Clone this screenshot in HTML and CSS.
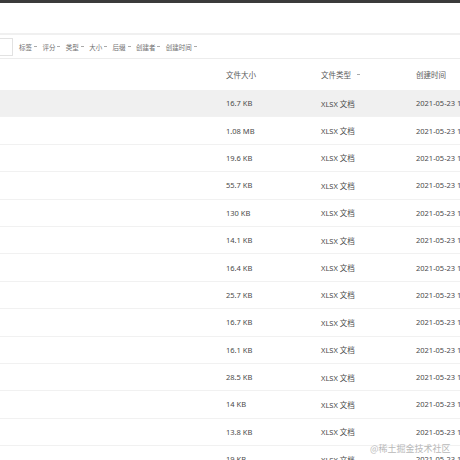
FILE: index.html
```html
<!DOCTYPE html>
<html lang="zh">
<head>
<meta charset="utf-8">
<link rel="stylesheet" href="styles.css">
</head>
<body>
<div class="page">
  <div class="topbar"></div>
  <div class="spacer"></div>
  <div class="filters">
    <div class="search"></div>
    <span class="filter">标签<i class="chev"></i></span>
    <span class="filter">评分<i class="chev"></i></span>
    <span class="filter">类型<i class="chev"></i></span>
    <span class="filter">大小<i class="chev"></i></span>
    <span class="filter">后缀<i class="chev"></i></span>
    <span class="filter">创建者<i class="chev"></i></span>
    <span class="filter">创建时间<i class="chev"></i></span>
  </div>
  <div class="table">
    <div class="row head">
      <span></span><span>文件大小</span><span>文件类型<i class="chev hchev"></i></span><span>创建时间</span>
    </div>
    <div class="row sel"><span></span><span>16.7 KB</span><span>XLSX 文档</span><span>2021-05-23 10:21</span></div>
    <div class="row"><span></span><span>1.08 MB</span><span>XLSX 文档</span><span>2021-05-23 10:21</span></div>
    <div class="row"><span></span><span>19.6 KB</span><span>XLSX 文档</span><span>2021-05-23 10:21</span></div>
    <div class="row"><span></span><span>55.7 KB</span><span>XLSX 文档</span><span>2021-05-23 10:21</span></div>
    <div class="row"><span></span><span>130 KB</span><span>XLSX 文档</span><span>2021-05-23 10:21</span></div>
    <div class="row"><span></span><span>14.1 KB</span><span>XLSX 文档</span><span>2021-05-23 10:21</span></div>
    <div class="row"><span></span><span>16.4 KB</span><span>XLSX 文档</span><span>2021-05-23 10:21</span></div>
    <div class="row"><span></span><span>25.7 KB</span><span>XLSX 文档</span><span>2021-05-23 10:21</span></div>
    <div class="row"><span></span><span>16.7 KB</span><span>XLSX 文档</span><span>2021-05-23 10:21</span></div>
    <div class="row"><span></span><span>16.1 KB</span><span>XLSX 文档</span><span>2021-05-23 10:21</span></div>
    <div class="row"><span></span><span>28.5 KB</span><span>XLSX 文档</span><span>2021-05-23 10:21</span></div>
    <div class="row"><span></span><span>14 KB</span><span>XLSX 文档</span><span>2021-05-23 10:21</span></div>
    <div class="row"><span></span><span>13.8 KB</span><span>XLSX 文档</span><span>2021-05-23 10:21</span></div>
    <div class="row"><span></span><span>19 KB</span><span>XLSX 文档</span><span>2021-05-23 10:21</span></div>
  </div>
  <div class="watermark">@稀土掘金技术社区</div>
</div>
</body>
</html>
```
FILE: styles.css
```css
html, body {
  margin: 0;
  padding: 0;
  background: #fff;
}
.page {
  position: relative;
  width: 460px;
  height: 460px;
  overflow: hidden;
  font-family: "Noto Sans", "Noto Sans CJK SC", sans-serif;
  color: #4a4a4a;
}
.topbar {
  height: 3px;
  background: #3b3b3b;
}
.spacer {
  height: 30px;
  border-bottom: 2px solid #f0f0f0;
}
.filters {
  height: 23px;
  display: flex;
  align-items: center;
  border-bottom: 1px solid #ececec;
  font-size: 6.5px;
  color: #707070;
  white-space: nowrap;
}
.search {
  width: 12px;
  height: 16px;
  border: 1px solid #e2e2e2;
  border-left: none;
  margin-right: 6px;
  flex: none;
}
.filter {
  display: inline-flex;
  align-items: center;
  margin-right: 5.4px;
}
.chev {
  display: inline-block;
  width: 3px;
  height: 1.5px;
  border-bottom: 1px solid #aaa;
  margin-left: 2px;
  transform: translateY(-1px);
}
.hchev {
  margin-left: 6px;
}
.table {
  display: flex;
  flex-direction: column;
}
.row {
  display: grid;
  grid-template-columns: 226px 95px 95px 120px;
  height: 27.4px;
  align-items: center;
  font-size: 7.5px;
  border-bottom: 1px solid #f1f1f1;
  box-sizing: border-box;
  white-space: nowrap;
}
.row.head {
  height: 31px;
  border-bottom: none;
  color: #5a5a5a;
}
.row.sel {
  background: #f0f0f0;
}
.row span {
  display: inline-flex;
  align-items: center;
}
.watermark {
  position: absolute;
  left: 370px;
  top: 442px;
  font-size: 9px;
  color: #b8b8b8;
  font-family: "Noto Sans CJK SC", sans-serif;
  white-space: nowrap;
}
```
